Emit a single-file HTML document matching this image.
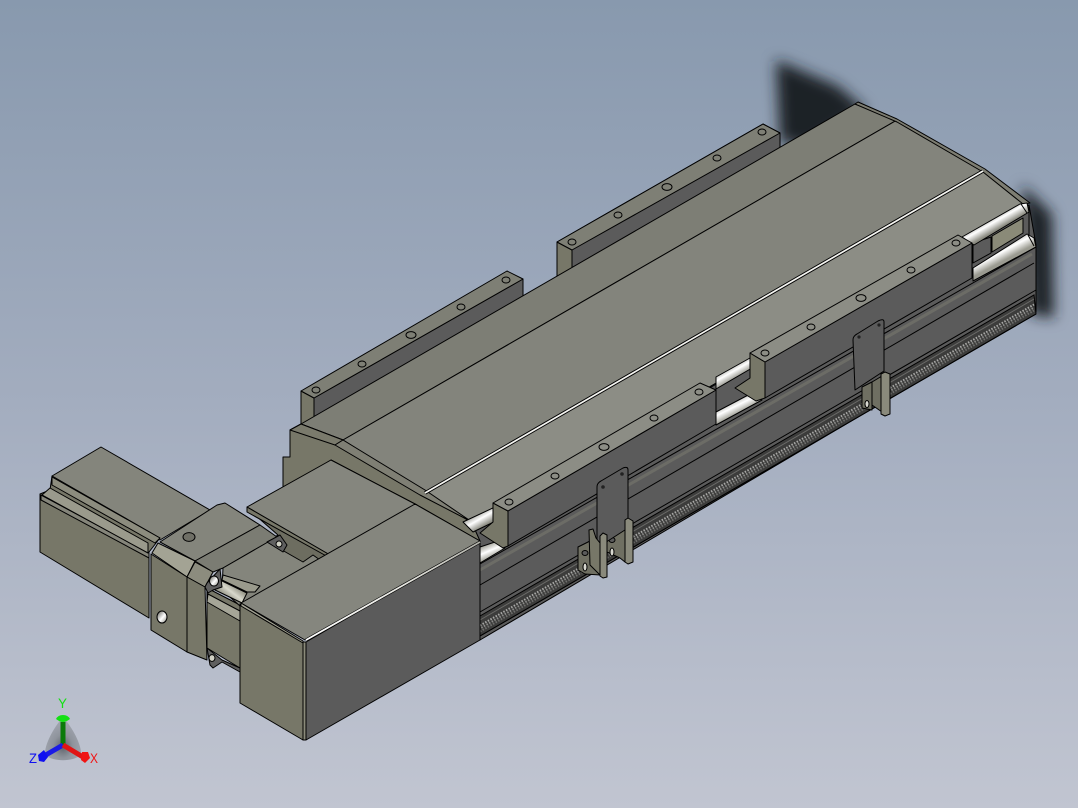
<!DOCTYPE html>
<html>
<head>
<meta charset="utf-8">
<style>
html,body{margin:0;padding:0;width:1078px;height:808px;overflow:hidden;background:#a5afc0}
svg{display:block}
.l polygon,.l path,.l polyline,.l line,.l ellipse{stroke:#000;stroke-width:1;stroke-linejoin:round}
text{font-family:"Liberation Sans",sans-serif;font-size:14px}
</style>
</head>
<body>
<svg width="1078" height="808" viewBox="0 0 1078 808" xmlns="http://www.w3.org/2000/svg">
<defs>
<linearGradient id="bg" x1="0" y1="0" x2="0" y2="1">
<stop offset="0" stop-color="#8899ae"/>
<stop offset=".5" stop-color="#a3adbf"/>
<stop offset="1" stop-color="#c1c5d1"/>
</linearGradient>
<linearGradient id="railT" gradientUnits="userSpaceOnUse" x1="992" y1="214" x2="1000" y2="228">
<stop offset="0" stop-color="#8f8f87"/>
<stop offset=".5" stop-color="#ffffff"/>
<stop offset="1" stop-color="#8a8a80"/>
</linearGradient>
<linearGradient id="railB" gradientUnits="userSpaceOnUse" x1="996" y1="243" x2="1005" y2="260">
<stop offset="0" stop-color="#8f8f87"/>
<stop offset=".55" stop-color="#ffffff"/>
<stop offset="1" stop-color="#9a9a90"/>
</linearGradient>
<linearGradient id="railT2" gradientUnits="userSpaceOnUse" x1="728" y1="365" x2="736" y2="379">
<stop offset="0" stop-color="#8f8f87"/>
<stop offset=".5" stop-color="#ffffff"/>
<stop offset="1" stop-color="#8a8a80"/>
</linearGradient>
<linearGradient id="railB2" gradientUnits="userSpaceOnUse" x1="732" y1="397" x2="740" y2="413">
<stop offset="0" stop-color="#8f8f87"/>
<stop offset=".55" stop-color="#ffffff"/>
<stop offset="1" stop-color="#9a9a90"/>
</linearGradient>
<linearGradient id="railT3" gradientUnits="userSpaceOnUse" x1="476" y1="512" x2="484" y2="526">
<stop offset="0" stop-color="#8f8f87"/>
<stop offset=".5" stop-color="#ffffff"/>
<stop offset="1" stop-color="#8a8a80"/>
</linearGradient>
<linearGradient id="railB3" gradientUnits="userSpaceOnUse" x1="486" y1="544" x2="492" y2="558">
<stop offset="0" stop-color="#9a9a90"/>
<stop offset=".5" stop-color="#ffffff"/>
<stop offset="1" stop-color="#9a9a90"/>
</linearGradient>
<linearGradient id="hole" x1="0" y1="0" x2="1" y2="1">
<stop offset="0" stop-color="#55554d"/>
<stop offset=".55" stop-color="#ffffff"/>
<stop offset="1" stop-color="#8a8a80"/>
</linearGradient>
<linearGradient id="cyl" gradientUnits="userSpaceOnUse" x1="236" y1="585" x2="226" y2="598">
<stop offset="0" stop-color="#8c8c7e"/>
<stop offset=".5" stop-color="#d8d8cc"/>
<stop offset="1" stop-color="#8c8c7e"/>
</linearGradient>
<linearGradient id="edge" gradientUnits="userSpaceOnUse" x1="305" y1="640" x2="480" y2="541">
<stop offset="0" stop-color="#ffffff"/>
<stop offset=".55" stop-color="#e8e8e2"/>
<stop offset="1" stop-color="#b0b0a8"/>
</linearGradient>
<filter id="blur" x="-30%" y="-30%" width="160%" height="160%"><feGaussianBlur stdDeviation="7"/></filter>
<radialGradient id="tri" cx=".5" cy=".68" r=".6">
<stop offset="0" stop-color="#4f545b" stop-opacity=".9"/>
<stop offset=".45" stop-color="#7f848b" stop-opacity=".75"/>
<stop offset="1" stop-color="#8d9199" stop-opacity=".55"/>
</radialGradient>
</defs>

<rect width="1078" height="808" fill="url(#bg)"/>

<!-- shadow -->
<g filter="url(#blur)" fill="#1f2227">
<polygon points="776,60 838,86 866,110 810,148 780,142"/>
<polygon points="1022,185 1052,214 1054,318 1030,314"/>
</g>

<g class="l">
<!-- back clamps -->
<polygon points="557,242 763,124 780,133 780,150 572,270 557,280" fill="#5b5b5b"/>
<polygon points="557,242 572,250 572,272 557,280" fill="#777768"/>
<polygon points="557,242 763,124 780,133 572,250" fill="#7e7f75"/>
<polygon points="301,391 314,398 314,420 301,426" fill="#777768"/>
<polygon points="314,398 523,279 523,300 314,420" fill="#5b5b5b"/>
<polygon points="301,391 507,271 523,279 314,398" fill="#7e7f75"/>
</g>

<g class="l">
<!-- body front dark -->
<polygon points="470,525 1029,205 1036,245 1036,312 480,640" fill="#5b5b5b"/>
<!-- top surfaces -->
<polygon points="301,424 855,104 897,120 343,440" fill="#7d7e75"/>
<polygon points="343,440 897,120 983,171 425,492" fill="#83847c"/>
<polygon points="425,492 983,171 1023,203 1023,206 470,525" fill="#8c8d85"/>
<!-- back chamfer -->
<polygon points="855,104 858,102 897,119 985,169 1030,203 1023,204 983,172 897,122" fill="#7d7d72"/>
<!-- left end -->
<polygon points="290,430 301,424 343,440 425,492 472,523 480,541 417,505 331,460 283,490 283,457 290,457" fill="#777768"/>
<polygon points="301,424 343,440 335,445 290,430" fill="#7a7a6c"/>
<polygon points="343,440 425,490 472,522 420,495 335,445" fill="#7f7f74"/>
</g>
<!-- white seam -->
<polyline points="425,493 983,171" fill="none" stroke="#000" stroke-width="3.6"/>
<polyline points="425,493 983,171" fill="none" stroke="#f6f6f2" stroke-width="1.7"/>

<!-- notch end -->
<g class="l">
<polygon points="973,243 991,237 991,253 973,263" fill="#5b5b5b"/>
<polygon points="992,236 1023,218 1023,233 992,252" fill="#8a8a78"/>
<line x1="1036" y1="246" x2="1036" y2="312"/>
<line x1="1029" y1="206" x2="1029" y2="236"/>
</g>

<!-- rails -->
<g class="l">
<polygon points="962,237 1020,204 1027,203 1029,212 974,245" fill="url(#railT)"/>
<polygon points="973,268 1027,234 1034,238 1036,247 973,281" fill="url(#railB)"/>
<polygon points="716,377 750,358 752,368 716,389" fill="url(#railT2)"/>
<polygon points="716,412 752,393 762,400 716,425" fill="url(#railB2)"/>
<polygon points="463,522 495,507 498,520 473,532" fill="url(#railT3)"/>
<polygon points="480,547 498,541 505,548 480,563" fill="url(#railB3)"/>
<line x1="1021" y1="204" x2="1027" y2="213" fill="none"/>
<line x1="1028" y1="235" x2="1034" y2="246" fill="none"/>
</g>

<!-- extrusion lines -->
<g fill="none" stroke="#000" stroke-width="1">
<line x1="480" y1="585" x2="1034" y2="263"/>
<line x1="480" y1="612" x2="1036" y2="290"/>
<line x1="480" y1="564" x2="1036" y2="247"/>
</g>
<line x1="480" y1="570" x2="1032" y2="254" stroke="#6c6c66" stroke-width="3"/>

<!-- toothed stripe -->
<polygon points="480,616 1034,295 1036,314 480,636" fill="#3c3c3b" stroke="#000" stroke-width="1"/>
<line x1="480" y1="620" x2="1034" y2="299" stroke="#6a6a68" stroke-width="1"/>
<line x1="480" y1="625.5" x2="1034" y2="304.5" stroke="#a8a8a6" stroke-width="2" stroke-dasharray="1.5 1.5"/>
<line x1="480" y1="628.5" x2="1034" y2="307.5" stroke="#8c8c8a" stroke-width="2" stroke-dasharray="1.5 1.5" stroke-dashoffset="1.5"/>
<line x1="480" y1="631.5" x2="1034" y2="310.5" stroke="#6e6e6c" stroke-width="2" stroke-dasharray="1.5 1.5"/>
<line x1="480" y1="636" x2="1036" y2="314" stroke="#000" stroke-width="1"/>

<g class="l">
<!-- clamp front 2 -->
<polygon points="750,353 765,362 765,398 756,401 735,388 750,378" fill="#777768"/>
<polygon points="765,362 972,243 972,278 765,398" fill="#5b5b5b"/>
<polygon points="750,353 958,235 972,243 765,362" fill="#8c8d85"/>
<ellipse cx="765" cy="353" rx="4" ry="3" fill="none"/>
<ellipse cx="811" cy="327" rx="4" ry="3" fill="none"/>
<ellipse cx="861" cy="298" rx="5" ry="3.4" fill="none"/>
<ellipse cx="911" cy="270" rx="4" ry="3" fill="none"/>
<ellipse cx="956" cy="243" rx="4" ry="3" fill="none"/>
<!-- clamp front 1 -->
<polygon points="493,503 508,511 508,546 503,548 480,533 493,522" fill="#777768"/>
<polygon points="508,511 716,390 716,424 508,546" fill="#5b5b5b"/>
<polygon points="493,503 700,383 716,390 508,511" fill="#8c8d85"/>
<ellipse cx="509" cy="502" rx="4" ry="3" fill="none"/>
<ellipse cx="555" cy="476" rx="4" ry="3" fill="none"/>
<ellipse cx="604" cy="447" rx="5" ry="3.4" fill="none"/>
<ellipse cx="654" cy="418" rx="4" ry="3" fill="none"/>
<ellipse cx="699" cy="392" rx="4" ry="3" fill="none"/>
<!-- back clamp holes -->
<ellipse cx="316" cy="390" rx="4" ry="3" fill="none"/>
<ellipse cx="362" cy="364" rx="4" ry="3" fill="none"/>
<ellipse cx="411" cy="335" rx="5" ry="3.4" fill="none"/>
<ellipse cx="461" cy="307" rx="4" ry="3" fill="none"/>
<ellipse cx="506" cy="280" rx="4" ry="3" fill="none"/>
<ellipse cx="572" cy="242" rx="4" ry="3" fill="none"/>
<ellipse cx="618" cy="215" rx="4" ry="3" fill="none"/>
<ellipse cx="667" cy="187" rx="5" ry="3.4" fill="none"/>
<ellipse cx="717" cy="158" rx="4" ry="3" fill="none"/>
<ellipse cx="762" cy="132" rx="4" ry="3" fill="none"/>

<!-- clip 1 -->
<polygon points="578,547 590,541 600,545 600,575 585,574 578,570" fill="#6f6f62"/>
<ellipse cx="585" cy="553" rx="3" ry="2.5" fill="#5b5b5b"/>
<ellipse cx="585" cy="567" rx="2" ry="4" fill="#d8d8d0"/>
<polygon points="607,535 625,525 625,562 620,558 607,552" fill="#6f6f62"/>
<ellipse cx="612" cy="540" rx="3" ry="2.5" fill="#5b5b5b"/>
<ellipse cx="612" cy="552" rx="2" ry="4" fill="#d8d8d0"/>
<path d="M597 487 Q597 483 601 481 L623 468 Q628 466 628 470 L628 528 L597 548 Z" fill="#5b5b5b"/>
<polygon points="625,520 628,518 633,521 633,562 628,564 625,562" fill="#8a8a7c"/>
<polygon points="589,530 593,529 596,538 600,543 600,575 590,565" fill="#777768"/>
<polygon points="600,536 603,533 607,535 607,577 603,578 600,576" fill="#8a8a7c"/>
<circle cx="603" cy="487" r="1.8" fill="#222" stroke="none"/>
<circle cx="622" cy="474" r="1.8" fill="#222" stroke="none"/>

<!-- clip 2 -->
<polygon points="862,387 872,382 872,410 862,408" fill="#6f6f62"/>
<polygon points="872,382 882,376 882,412 872,405" fill="#6f6f62"/>
<ellipse cx="867" cy="404" rx="2" ry="3.5" fill="#d8d8d0"/>
<path d="M853 340 Q853 336 857 334 L878 321 Q884 318 884 322 L884 371 L855 390 Z" fill="#5b5b5b"/>
<polygon points="881,374 885,372 890,374 890,414 885,416 881,414" fill="#8a8a7c"/>
<circle cx="859" cy="337" r="1.6" fill="#222" stroke="none"/>
<circle cx="879" cy="325" r="1.6" fill="#222" stroke="none"/>
</g>

<g class="l">
<!-- backing between box and gearbox -->
<polygon points="247,508 330,556 241,604 225,566 278,535" fill="#6d6d60" stroke="none"/>
<!-- upper box on end -->
<polygon points="247,507 331,460 417,505 330,555" fill="#85867e"/>
<polygon points="247,507 330,555 330,558 247,512" fill="#777768"/>

<!-- motor -->
<polygon points="52,476 101,447 210,510 160,540" fill="#84857c"/>
<polygon points="40,494 50,490 52,476 160,538 149,552 149,618 40,552" fill="#777768"/>
<polygon points="41,495 149,553 149,558 41,500" fill="#85857a"/>
<polygon points="52,477 160,538 155,543 52,485" fill="#8c8c7e"/>
<polygon points="50,488 148,543 148,553 42,495" fill="#9a9a8c"/>

<!-- flange 1 -->
<polygon points="160,542 217,505 225,503 260,525 195,561" fill="#84857c"/>
<polygon points="152,553 158,543 195,561 187,577" fill="#a3a394"/>
<polygon points="151,554 187,577 187,652 151,630" fill="#777768"/>
<ellipse cx="189" cy="537" rx="6" ry="4.4" fill="#6f6f66"/>
<ellipse cx="162" cy="617" rx="5" ry="6" fill="url(#hole)"/>
<!-- second plate -->
<polygon points="195,561 260,525 277,537 223,568 213,572" fill="#7b7c73"/>
<polygon points="187,577 195,562 213,572 205,587" fill="#8c8c7e"/>
<polygon points="187,577 205,587 207,660 187,652" fill="#777768"/>
<!-- gear box -->
<polygon points="207,588 240,605 240,668 207,648" fill="#777768"/>
<polygon points="223,568 268,542 303,562 313,555 320,560 240,606 222,590" fill="#84857c"/>
<polygon points="223,575 260,586 255,592 247,592 222,580" fill="#9a9a8c"/>
<polygon points="220,580 247,593 242,603 215,590" fill="url(#cyl)"/>
<polygon points="208,594 240,611 240,621 207,602" fill="#a6a698"/>
<polygon points="207,648 222,660 240,668 240,672 222,662 213,668 210,665" fill="#5f5f5f"/>
<ellipse cx="212" cy="658" rx="3" ry="3.4" fill="#d0d0c4"/>
<path d="M205 587 L207 583 L220 569 L222 587 L213 590 L208 593 Z" fill="#5f5f5f"/>
<ellipse cx="214" cy="581" rx="4.5" ry="5" fill="url(#hole)"/>
<path d="M267 542 L280 535 L287 545 L283 552 Z" fill="#5f5f5f"/>
<ellipse cx="279" cy="544" rx="3" ry="3" fill="#d0d0c4"/>

<!-- motor cover -->
<polygon points="240,604 303,642 303,740 240,703" fill="#777768"/>
<polygon points="306,642 480,541 480,640 306,740" fill="#5b5b5b"/>
<polygon points="241,603 415,504 480,541 305,640" fill="#85867e"/>
<polygon points="241,603 303,641 303,643 241,606" fill="#a3a394"/>
<polygon points="303,642 306,642 306,740 303,740" fill="#8a8a7a"/>
</g>
<line x1="306" y1="640" x2="480" y2="542" stroke="#000" stroke-width="3"/>
<line x1="306" y1="640" x2="480" y2="542" stroke="url(#edge)" stroke-width="1.8"/>

<!-- triad -->
<path d="M63 717 C72 727 82 745 81 755 C72 762 54 762 45 755 C44 745 54 727 63 717 Z" fill="url(#tri)"/>
<line x1="63" y1="745" x2="63" y2="722" stroke="#0a7a0a" stroke-width="5"/>
<path d="M56 719 Q58 715 63 715 Q68 715 70 719 Q66 722 63 722 Q60 722 56 719 Z" fill="#14e014"/>
<line x1="63" y1="745" x2="44" y2="756" stroke="#1a1ae6" stroke-width="5"/>
<path d="M38 755 L44 750 L48 757 L44 762 L39 761 Z" fill="#1010f0"/>
<line x1="63" y1="745" x2="83" y2="757" stroke="#e01414" stroke-width="5"/>
<path d="M82 752 L88 752 L90 758 L85 763 L81 760 Z" fill="#f01414"/>
<text x="58" y="708" fill="#14e014" textLength="9" lengthAdjust="spacingAndGlyphs">Y</text>
<text x="29" y="763" fill="#1010f0" textLength="8" lengthAdjust="spacingAndGlyphs">Z</text>
<text x="90" y="763" fill="#f01414" textLength="8" lengthAdjust="spacingAndGlyphs">X</text>
</svg>
</body>
</html>
